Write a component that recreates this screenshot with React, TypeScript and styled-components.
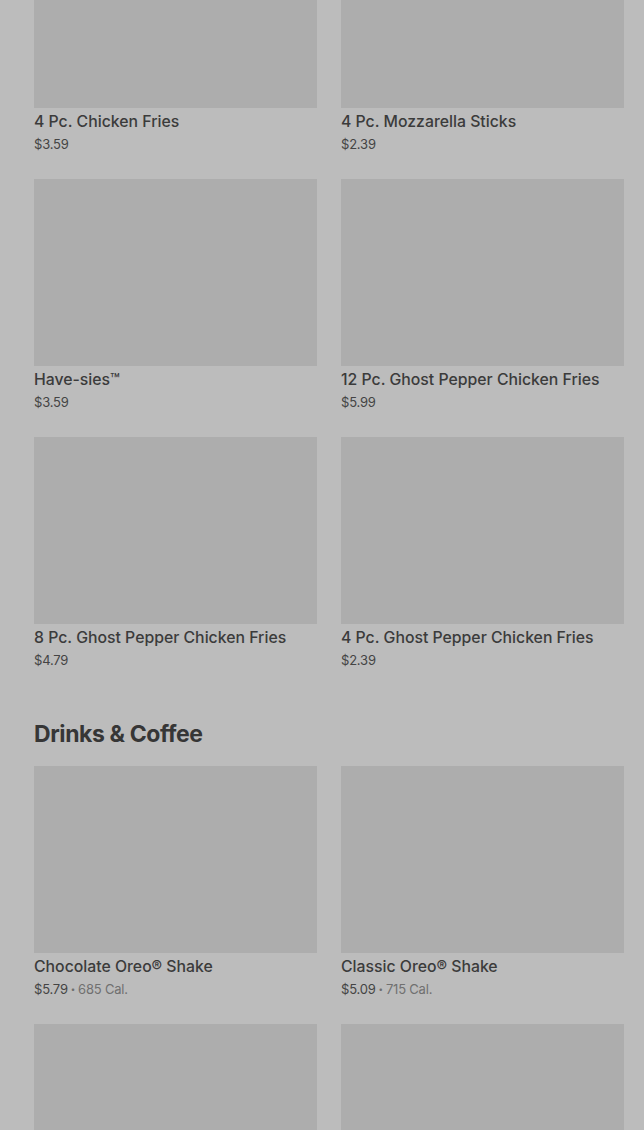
import React from "react";
import styled, { createGlobalStyle } from "styled-components";

const GlobalStyle = createGlobalStyle`
   html, body {
      margin: 0;
      padding: 0;
      background: #bcbcbc;
      font-family: Inter, "Noto Sans", Roboto, sans-serif;
      overflow: hidden;
   }
`;

type Item = { name: string; price: string; cal?: string };

const sides: Item[] = [
   { name: "4 Pc. Chicken Fries", price: "$3.59" },
   { name: "4 Pc. Mozzarella Sticks", price: "$2.39" },
   { name: "Have-sies™", price: "$3.59" },
   { name: "12 Pc. Ghost Pepper Chicken Fries", price: "$5.99" },
   { name: "8 Pc. Ghost Pepper Chicken Fries", price: "$4.79" },
   { name: "4 Pc. Ghost Pepper Chicken Fries", price: "$2.39" },
];

const drinks: Item[] = [
   { name: "Chocolate Oreo® Shake", price: "$5.79", cal: "685 Cal." },
   { name: "Classic Oreo® Shake", price: "$5.09", cal: "715 Cal." },
   { name: "", price: "" },
   { name: "", price: "" },
];

function App() {
   return (
      <>
         <GlobalStyle />
         <Page>
            <Section>
               <Grid>
                  {sides.map((item, index) => (
                     <Card key={index} item={item} />
                  ))}
               </Grid>
            </Section>
            <Section>
               <Heading>Drinks &amp; Coffee</Heading>
               <Grid>
                  {drinks.map((item, index) => (
                     <Card key={index} item={item} />
                  ))}
               </Grid>
            </Section>
         </Page>
      </>
   );
}

function Card({ item }: { item: Item }) {
   return (
      <CardBox>
         <Thumb />
         {item.name && <Title>{item.name}</Title>}
         {item.price && (
            <Meta>
               <Price>{item.price}</Price>
               {item.cal && (
                  <>
                     <Dot>•</Dot>
                     <Cal>{item.cal}</Cal>
                  </>
               )}
            </Meta>
         )}
      </CardBox>
   );
}

export default App;

const Page = styled.div`
   width: 644px;
   height: 1130px;
   overflow: hidden;
   box-sizing: border-box;
   padding: 0 20px 0 34px;
   display: flex;
   flex-direction: column;
   gap: 49px;
`;

const Section = styled.section`
   display: flex;
   flex-direction: column;
   &:first-child {
      margin-top: -79px;
   }
`;

const Heading = styled.h2`
   margin: 0 0 16px;
   font-size: 23px;
   line-height: 32px;
   font-weight: 700;
   letter-spacing: -0.4px;
   color: #363636;
`;

const Grid = styled.div`
   display: grid;
   grid-template-columns: 283px 283px;
   column-gap: 24px;
   row-gap: 26px;
`;

const CardBox = styled.div`
   display: flex;
   flex-direction: column;
`;

const Thumb = styled.div`
   height: 187px;
   background: #adadad;
`;

const Title = styled.div`
   margin-top: 4px;
   font-size: 15.8px;
   line-height: 20px;
   font-weight: 500;
   color: #3b3b3b;
   white-space: nowrap;
`;

const Meta = styled.div`
   margin-top: 3px;
   display: flex;
   align-items: center;
   font-size: 13px;
   line-height: 18px;
   letter-spacing: -0.2px;
`;

const Price = styled.span`
   color: #444444;
`;

const Dot = styled.span`
   margin: 0 3px;
   font-size: 8px;
   color: #6e6e6e;
`;

const Cal = styled.span`
   color: #707070;
`;
